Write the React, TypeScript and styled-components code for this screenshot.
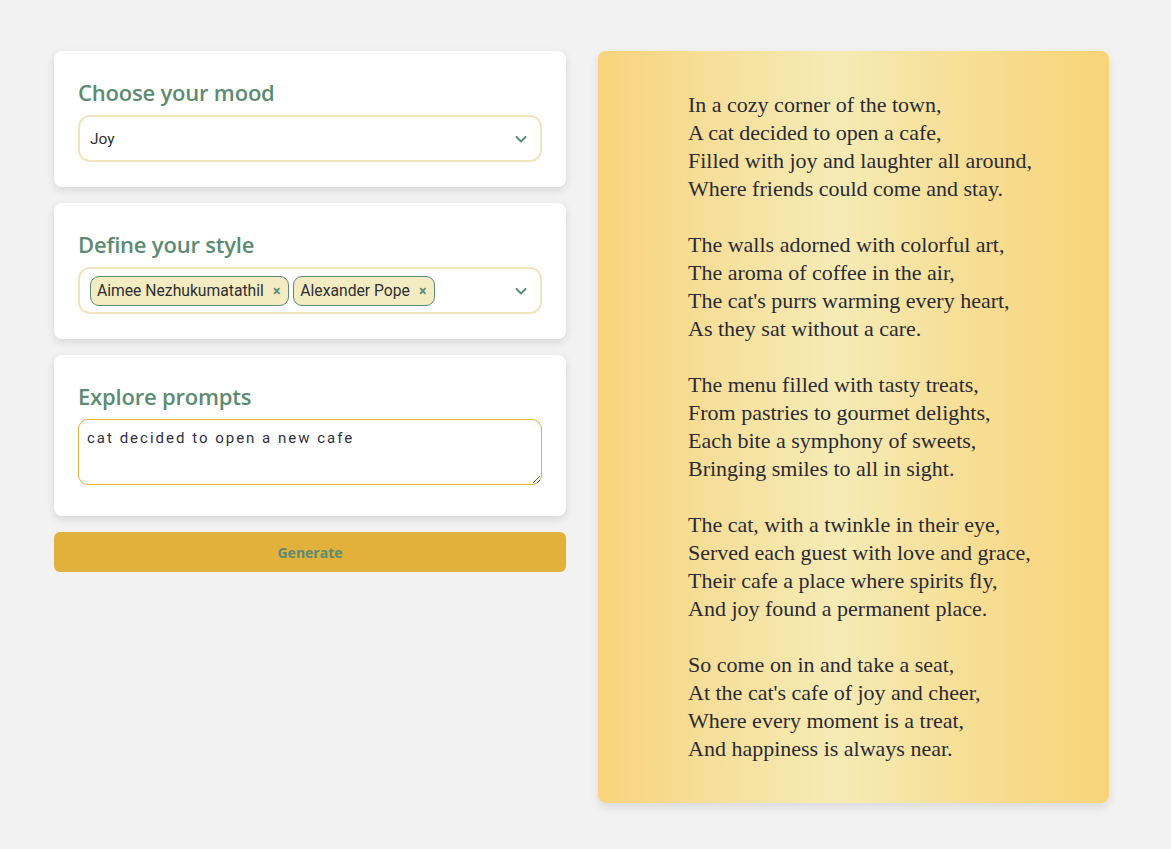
import React from "react";
import styled, { createGlobalStyle } from "styled-components";

const Global = createGlobalStyle`
  html, body { margin: 0; padding: 0; background: #f1f2f1; }
  body { font-family: Roboto, "Liberation Sans", sans-serif; }
  * { box-sizing: border-box; }
`;

const Page = styled.div`
  display: grid;
  grid-template-columns: 512px 511px;
  column-gap: 32px;
  align-items: start;
  padding: 51px 0 0 54px;
  min-height: 849px;
`;

const Column = styled.div`
  display: flex;
  flex-direction: column;
  gap: 16px;
`;

const Card = styled.section<{ $bottom?: number }>`
  background: #ffffff;
  border-radius: 8px;
  box-shadow: 0 3px 8px rgba(0, 0, 0, 0.12);
  padding: 25px 24px ${(p) => p.$bottom ?? 25}px 24px;
`;

const Heading = styled.h2`
  margin: 0 0 7px 0;
  font-family: "Open Sans", "Noto Sans", sans-serif;
  font-weight: 600;
  font-size: 22px;
  line-height: 32px;
  letter-spacing: -0.2px;
  color: #5c8b73;
`;

const SelectBox = styled.div`
  display: flex;
  align-items: center;
  height: 47px;
  border: 2px solid #f1e3bd;
  border-radius: 12px;
  padding: 0 12px 0 10px;
`;

const SelectValue = styled.span`
  flex: 1;
  font-family: Roboto, sans-serif;
  font-size: 15.5px;
  color: #2f2f2f;
`;

const Chips = styled.div`
  flex: 1;
  display: flex;
  gap: 4px;
`;

const Chip = styled.span`
  display: inline-flex;
  align-items: center;
  gap: 9px;
  height: 30px;
  padding: 0 8px 0 6px;
  background: #f3ecc2;
  border: 1px solid #5c8b73;
  border-radius: 9px;
  font-family: Roboto, sans-serif;
  font-size: 15.7px;
  color: #2f2f2f;
`;

const ChipX = styled.span`
  color: #5c8b73;
  font-size: 14px;
  font-weight: 700;
`;

const Chevron = () => (
  <svg width="14" height="14" viewBox="0 0 14 14">
    <path d="M2.5 5 L7 9.5 L11.5 5" fill="none" stroke="#5c8b73" strokeWidth="2" strokeLinecap="round" strokeLinejoin="round" />
  </svg>
);

const TextArea = styled.textarea`
  display: block;
  width: 100%;
  height: 66px;
  border: 1px solid #e2b23d;
  border-radius: 10px;
  padding: 9px 8px;
  font-family: Roboto, sans-serif;
  font-size: 15px;
  letter-spacing: 2px;
  color: #2f2f3f;
  background: #fff;
  outline: none;
  resize: vertical;
`;

const GenerateButton = styled.button`
  height: 40px;
  border: none;
  border-radius: 6px;
  background: #e1b13b;
  color: #5c8b73;
  font-family: "Open Sans", "Noto Sans", sans-serif;
  font-weight: 700;
  font-size: 14px;
  cursor: pointer;
`;

const PoemPanel = styled.article`
  height: 752px;
  border-radius: 8px;
  background: linear-gradient(90deg, #f8d37c 0%, #f6e09d 25%, #f5ebb5 47%, #f7df98 70%, #f8d478 100%);
  box-shadow: 0 4px 10px rgba(0, 0, 0, 0.1);
  padding: 40px 30px 40px 90px;
`;

const Stanza = styled.p`
  margin: 0 0 28px 0;
  font-family: "Liberation Serif", "DejaVu Serif", serif;
  font-size: 22px;
  line-height: 28px;
  color: #2b2a33;
  white-space: pre-line;
`;

const poem = [
  "In a cozy corner of the town,\nA cat decided to open a cafe,\nFilled with joy and laughter all around,\nWhere friends could come and stay.",
  "The walls adorned with colorful art,\nThe aroma of coffee in the air,\nThe cat's purrs warming every heart,\nAs they sat without a care.",
  "The menu filled with tasty treats,\nFrom pastries to gourmet delights,\nEach bite a symphony of sweets,\nBringing smiles to all in sight.",
  "The cat, with a twinkle in their eye,\nServed each guest with love and grace,\nTheir cafe a place where spirits fly,\nAnd joy found a permanent place.",
  "So come on in and take a seat,\nAt the cat's cafe of joy and cheer,\nWhere every moment is a treat,\nAnd happiness is always near.",
];

export default function App() {
  return (
    <>
      <Global />
      <Page>
        <Column>
          <Card>
            <Heading>Choose your mood</Heading>
            <SelectBox>
              <SelectValue>Joy</SelectValue>
              <Chevron />
            </SelectBox>
          </Card>
          <Card>
            <Heading>Define your style</Heading>
            <SelectBox>
              <Chips>
                <Chip>
                  Aimee Nezhukumatathil <ChipX>×</ChipX>
                </Chip>
                <Chip>
                  Alexander Pope <ChipX>×</ChipX>
                </Chip>
              </Chips>
              <Chevron />
            </SelectBox>
          </Card>
          <Card $bottom={31}>
            <Heading>Explore prompts</Heading>
            <TextArea defaultValue="cat decided to open a new cafe" spellCheck />
          </Card>
          <GenerateButton>Generate</GenerateButton>
        </Column>
        <PoemPanel>
          {poem.map((s, i) => (
            <Stanza key={i}>{s}</Stanza>
          ))}
        </PoemPanel>
      </Page>
    </>
  );
}
